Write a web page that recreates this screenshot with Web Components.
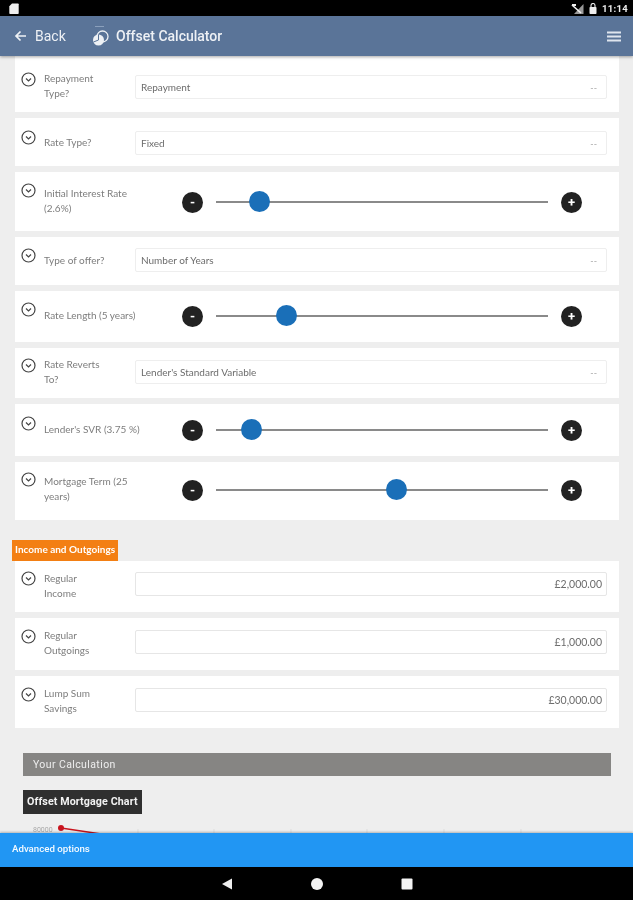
<!DOCTYPE html>
<html><head><meta charset="utf-8">
<style>
html,body{margin:0;padding:0;background:#eee;}
body{width:633px;height:900px;overflow:hidden;font-family:Roboto,"Liberation Sans",sans-serif;display:flex;flex-direction:column;filter:blur(.35px);}
</style></head><body>
<status-bar></status-bar>
<app-header></app-header>
<main-area>
  <calc-row h="56" it="15.5" lt="14.5" ct="19" label="Repayment|Type?"><select-box value="Repayment"></select-box></calc-row>
  <calc-row h="48" it="11.5" lt="16.5" ct="13" label="Rate Type?"><select-box value="Fixed"></select-box></calc-row>
  <calc-row h="59" it="10.5" lt="13.5" ct="19" label="Initial Interest Rate|(2.6%)"><range-slider pos="43"></range-slider></calc-row>
  <calc-row h="48" it="10.5" lt="15.5" ct="11" label="Type of offer?"><select-box value="Number of Years"></select-box></calc-row>
  <calc-row h="51" it="10.5" lt="16.5" ct="14" label="Rate Length (5 years)"><range-slider pos="70"></range-slider></calc-row>
  <calc-row h="50" it="9.5" lt="8.5" ct="12" label="Rate Reverts|To?"><select-box value="Lender's Standard Variable"></select-box></calc-row>
  <calc-row h="52" it="11.5" lt="17.5" ct="15" label="Lender's SVR (3.75 %)"><range-slider pos="35"></range-slider></calc-row>
  <calc-row h="58" it="9.5" lt="11.5" ct="17" label="Mortgage Term (25|years)"><range-slider pos="180"></range-slider></calc-row>
  <section-tag>Income and Outgoings</section-tag>
  <calc-row h="51" it="9.5" lt="9.5" ct="11" label="Regular|Income"><money-input value="£2,000.00"></money-input></calc-row>
  <calc-row h="52" it="10.5" lt="9.5" ct="12" label="Regular|Outgoings"><money-input value="£1,000.00"></money-input></calc-row>
  <calc-row h="52" it="10.5" lt="9.5" ct="12" label="Lump Sum|Savings"><money-input value="£30,000.00"></money-input></calc-row>
  <calc-result></calc-result>
</main-area>
<advanced-bar></advanced-bar>
<nav-bar></nav-bar>
<script>
const def=(name,html)=>{customElements.define(name,class extends HTMLElement{
  constructor(){super();this.attachShadow({mode:'open'});}
  connectedCallback(){this.shadowRoot.innerHTML=typeof html==='function'?html(this):html;}
});};

def('status-bar',`<style>
:host{display:flex;align-items:center;justify-content:space-between;height:16px;background:#000;color:#eee;padding:0 5px 0 9px;flex:none;font:700 9.5px Roboto,sans-serif;letter-spacing:.3px}
.r{display:flex;align-items:center;gap:5px}svg{display:block}
</style>
<svg width="10" height="11" viewBox="0 0 10 11"><path d="M3 .5h6a.7.7 0 0 1 .7.7v9a.7.7 0 0 1-.7.7H1a.7.7 0 0 1-.7-.7V3.2z" fill="#eee"/></svg>
<div class="r"><svg width="13" height="11" viewBox="0 0 13 11"><path d="M12.5 1v10H3z" fill="#999"/><path d="M1 2l9 8" stroke="#eee" stroke-width="1.6"/><path d="M1 1h4v2H1z" fill="#eee"/></svg>
<svg width="8" height="11" viewBox="0 0 8 11"><rect x=".5" y="4" width="7" height="7" rx=".8" fill="#eee"/><path d="M2 4V2.5a2 2 0 0 1 4 0V4" fill="none" stroke="#eee" stroke-width="1.1"/></svg>
<span>11:14</span></div>`);

def('app-header',`<style>
:host{display:flex;align-items:center;height:40px;background:#5a7498;color:#eef1f5;flex:none;padding:0 12px 0 14px;box-shadow:0 1px 3px rgba(0,0,0,.35);position:relative;z-index:2}
.back{font-size:14px;margin-left:8px;width:50px}
.t{font-weight:500;font-size:14px;margin-left:7px;flex:1}
svg{display:block}
</style>
<svg width="13" height="12" viewBox="0 0 13 12"><path d="M12 6H2M6.500 1.500L2 6l4.500 4.500" fill="none" stroke="#eef1f5" stroke-width="1.700"/></svg>
<span class="back">Back</span>
<svg width="17" height="22" viewBox="0 0 17 22" style="margin-left:7px"><path d="M3 1.500h9" stroke="#8ba0bc" stroke-width="1"/><circle cx="10.500" cy="11.500" r="5.500" fill="none" stroke="#eef1f5" stroke-width="1.300"/><circle cx="6.500" cy="15" r="5.500" fill="#eef1f5"/><path d="M6.500 15V9.500M6.500 15l-5 2" stroke="#5a7498" stroke-width="1"/></svg>
<span class="t">Offset Calculator</span>
<svg width="14" height="11" viewBox="0 0 14 11"><path d="M0 1.500h14M0 5.500h14M0 9.500h14" stroke="#dfe5ee" stroke-width="2"/></svg>`);

def('calc-row',el=>{const a=n=>el.getAttribute(n);return `<style>
:host{display:flex;align-items:flex-start;box-sizing:border-box;height:${a('h')}px;margin:0 14px 6px 15px;background:#fff;padding:0 12px 0 6px}
svg{flex:none;margin-top:${a('it')}px;display:block}
.l{width:99px;flex:none;margin-top:${a('lt')}px;padding-left:8px;box-sizing:border-box;font:400 10px/15px Lato,sans-serif;color:#7d7d7d;white-space:nowrap}
.c{flex:1;min-width:0;margin-top:${a('ct')}px}
</style>
<svg width="15" height="15" viewBox="0 0 15 15"><circle cx="7.500" cy="7.500" r="6.500" fill="none" stroke="#444" stroke-width="1.200"/><path d="M5 6.500l2.500 2.500L10 6.500" fill="none" stroke="#444" stroke-width="1.200"/></svg>
<div class="l">${a('label').replace('|','<br>')}</div><div class="c"><slot></slot></div>`;});

def('select-box',el=>`<style>
:host{display:flex;align-items:center;justify-content:space-between;box-sizing:border-box;height:24px;background:#fff;border:1px solid #eee;border-radius:2px;padding:0 9px 0 5px;font:400 10px Lato,sans-serif;color:#6c6c6c}
.d{color:#aaa;font-size:9px}
</style><span>${el.getAttribute('value')}</span><span class="d">--</span>`);

def('money-input',el=>`<style>
:host{display:flex;align-items:center;justify-content:flex-end;box-sizing:border-box;height:24px;background:#fff;border:1px solid #e6e6e6;border-radius:2px;padding:0 4px;font:400 10.5px Lato,sans-serif;color:#6c6c6c}
</style>${el.getAttribute('value')}`);

def('range-slider',el=>`<style>
:host{display:flex;align-items:center;height:22px;margin-left:47px;gap:13px;width:400px}
.b{width:21px;height:21px;border-radius:50%;background:#222;color:#fff;display:flex;align-items:center;justify-content:center;font:700 13px/1 Roboto,sans-serif;flex:none}
.t{flex:1;height:2px;background:#8a8a8a;position:relative}
.k{position:absolute;width:21px;height:21px;border-radius:50%;background:#1a6fb8;top:-10px;left:${el.getAttribute('pos')-10}px}
</style><span class="b">-</span><div class="t"><div class="k"></div></div><span class="b">+</span>`);

def('section-tag',`<style>
:host{display:block;width:max-content;height:21px;margin:20px 0 0 12px;padding:0 3px;background:#f37f13;color:#fff;font:700 10px/18px Lato,sans-serif;position:relative;z-index:1}
</style><slot></slot>`);

def('calc-result',`<style>
:host{display:block;padding:19px 0 0 23px;height:105px;box-sizing:border-box;overflow:hidden}
.bar{width:588px;height:23px;background:#868583;color:#eee;font:400 10.500px/23px Roboto,sans-serif;padding-left:10px;box-sizing:border-box;letter-spacing:.4px}
.tt{margin-top:14px;width:max-content;height:24px;background:#2f2f2f;color:#f2f2f2;font:700 10.700px/24px Roboto,sans-serif;padding:0 4px;letter-spacing:.1px}
svg{display:block;margin-top:7px}
</style><div class="bar">Your Calculation</div><div class="tt">Offset Mortgage Chart</div>
<svg width="600" height="30" viewBox="0 0 600 30"><path d="M115 8v14M191 8v14M268 8v14M344 8v14M421 8v14M498 8v14" stroke="#ddd"/><text x="10" y="11" font-size="7" fill="#aaa" font-family="Roboto">80000</text><path d="M38 7L85 14" stroke="#c8141e" stroke-width="1.500"/><circle cx="38" cy="7" r="3" fill="#c8141e"/></svg>`);

def('advanced-bar',`<style>
:host{display:block;height:34px;background:#2196f3;color:#f4faff;font:500 9.700px/32px Roboto,sans-serif;padding-left:12px;flex:none;position:relative;box-shadow:0 -1px 2px rgba(0,0,0,.25)}
</style>Advanced options`);

def('nav-bar',`<style>
:host{display:flex;height:33px;background:#000;flex:none;align-items:center;justify-content:center;gap:78px}
svg{display:block}
</style><svg width="12" height="12" viewBox="0 0 12 12"><path d="M11 0.500v11L1 6z" fill="#eee"/></svg>
<svg width="12" height="12" viewBox="0 0 12 12"><circle cx="6" cy="6" r="6" fill="#f4f4f4"/></svg>
<svg width="12" height="12" viewBox="0 0 12 12"><rect x=".5" y=".5" width="11" height="11" rx="1" fill="#f4f4f4"/></svg>`);
def('main-area',`<style>:host{display:block;flex:1;min-height:0;overflow:hidden;background:#eee}</style><slot></slot>`);
</script>
</body></html>
